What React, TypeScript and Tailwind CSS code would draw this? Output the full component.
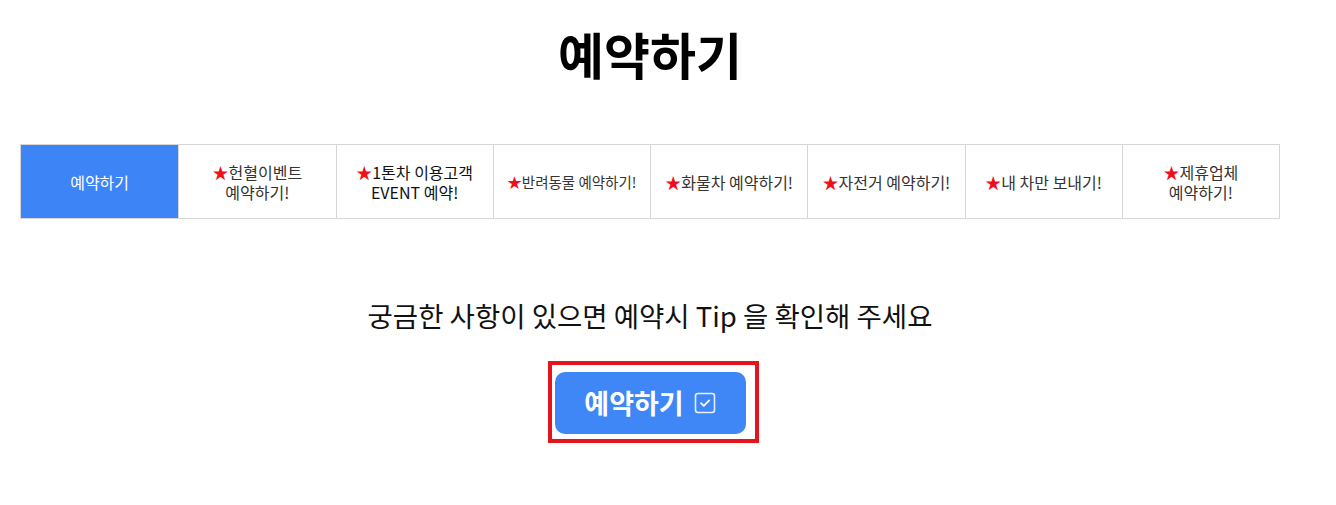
import React from "react";

const font = { fontFamily: '"Noto Sans CJK KR", "Noto Sans", sans-serif' };

type Tab = { lines: string[]; star?: boolean; size?: string; dark?: boolean };

const tabs: Tab[] = [
    { lines: ["예약하기"] },
    { lines: ["헌혈이벤트", "예약하기!"], star: true },
    { lines: ["1톤차 이용고객", "EVENT 예약!"], star: true, dark: true },
    { lines: ["반려동물 예약하기!"], star: true, size: "text-[14.5px]" },
    { lines: ["화물차 예약하기!"], star: true },
    { lines: ["자전거 예약하기!"], star: true },
    { lines: ["내 차만 보내기!"], star: true },
    { lines: ["제휴업체", "예약하기!"], star: true },
];

const CheckSquare: React.FC = () => (
    <svg width="22" height="22" viewBox="0 0 22 22" fill="none">
        <rect x="1.5" y="1.5" width="19" height="19" rx="2.5" stroke="#e8efff" strokeWidth="1.6" />
        <path d="M7 11.2l2.8 2.6L15.2 8.4" stroke="#ffffff" strokeWidth="1.8" strokeLinecap="round" strokeLinejoin="round" />
    </svg>
);

const App: React.FC = () => {
    return (
        <div className="min-h-[505px] bg-white" style={font}>
            <div className="ml-[20px] w-[1260px] flex flex-col items-center">
                <h1 className="mt-[20px] text-[50px] leading-[66px] font-bold text-black">예약하기</h1>

                <div className="mt-[58px] grid grid-cols-8 w-full h-[75px] border border-[#d6d6d6]">
                    {tabs.map((tab, i) => (
                        <div
                            key={i}
                            className={
                                i === 0
                                    ? "flex items-center justify-center bg-[#3d84f7] text-white text-[16px] leading-[20px]"
                                    : `flex items-center justify-center text-center border-l border-[#d6d6d6] leading-[20px] ${tab.size ?? "text-[16px]"} ${tab.dark ? "text-[#111]" : "text-[#333]"}`
                            }
                        >
                            <p>
                                {tab.star && <span className="text-[#f0101c]">★</span>}
                                {tab.lines[0]}
                                {tab.lines[1] && (
                                    <>
                                        <br />
                                        {tab.lines[1]}
                                    </>
                                )}
                            </p>
                        </div>
                    ))}
                </div>

                <p className="mt-[76px] text-[27.5px] leading-[40px] text-[#111]">
                    궁금한 사항이 있으면 예약시 Tip 을 확인해 주세요
                </p>

                <div className="mt-[26px] border-4 border-[#e5141d] pl-[3px] pr-[9px] pt-[7px] pb-[5px] ml-[6px]">
                    <button className="flex items-center gap-[10px] w-[191px] h-[62px] justify-center rounded-[10px] bg-[#3f86f7] text-white text-[27px] font-bold">
                        <span>예약하기</span>
                        <CheckSquare />
                    </button>
                </div>
            </div>
        </div>
    );
};

export default App;
